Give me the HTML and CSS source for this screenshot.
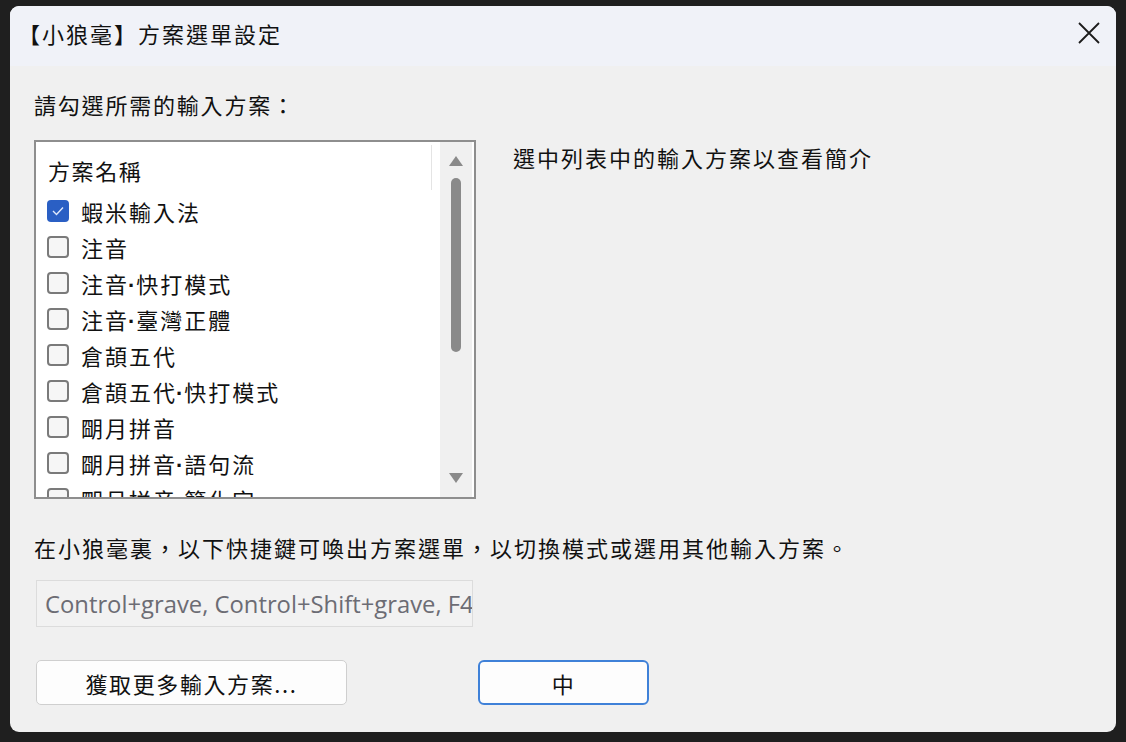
FILE: index.html
```html
<!DOCTYPE html>
<html lang="zh-Hant">
<head>
  <meta charset="UTF-8" />
  <title>【小狼毫】方案選單設定</title>
  <link rel="stylesheet" href="styles.css">
</head>
<body>
  <div class="window">
    <div class="titlebar">
      <div class="title">【小狼毫】方案選單設定</div>
      <button class="close-btn" aria-label="關閉">
        <svg width="22" height="22" viewBox="0 0 22 22">
          <path d="M1 1 L21 21 M21 1 L1 21" stroke="#1b1b1b" stroke-width="1.8" fill="none"/>
        </svg>
      </button>
    </div>

    <div class="content">
      <div class="label">請勾選所需的輸入方案：</div>

      <div class="top-row">
        <div class="listbox">
          <div class="list-body">
            <div class="list-header">方案名稱</div>
            <div class="item"><span class="check checked"><svg width="12" height="10" viewBox="0 0 12 10"><path d="M1 5 L4.5 8.5 L11 1.5" stroke="#dfe8fb" stroke-width="1.4" fill="none"/></svg></span><span class="name">蝦米輸入法</span></div>
            <div class="item"><span class="check"></span><span class="name">注音</span></div>
            <div class="item"><span class="check"></span><span class="name">注音<span class="dot">·</span>快打模式</span></div>
            <div class="item"><span class="check"></span><span class="name">注音<span class="dot">·</span>臺灣正體</span></div>
            <div class="item"><span class="check"></span><span class="name">倉頡五代</span></div>
            <div class="item"><span class="check"></span><span class="name">倉頡五代<span class="dot">·</span>快打模式</span></div>
            <div class="item"><span class="check"></span><span class="name">朙月拼音</span></div>
            <div class="item"><span class="check"></span><span class="name">朙月拼音<span class="dot">·</span>語句流</span></div>
            <div class="item"><span class="check"></span><span class="name">朙月拼音<span class="dot">·</span>簡化字</span></div>
          </div>
          <div class="scrollbar">
            <svg class="arrow-up" width="14" height="10" viewBox="0 0 14 10"><path d="M7 0 L14 10 L0 10 Z" fill="#8a8a8a"/></svg>
            <div class="thumb"></div>
            <div class="spacer"></div>
            <svg class="arrow-down" width="14" height="10" viewBox="0 0 14 10"><path d="M0 0 L14 0 L7 10 Z" fill="#8a8a8a"/></svg>
          </div>
        </div>
        <div class="info">選中列表中的輸入方案以查看簡介</div>
      </div>

      <div class="sentence">在小狼毫裏，以下快捷鍵可喚出方案選單，以切換模式或選用其他輸入方案。</div>

      <div class="hotkeys">Control+grave, Control+Shift+grave, F4</div>

      <div class="buttons">
        <button class="btn">獲取更多輸入方案...</button>
        <button class="btn btn-default">中</button>
      </div>
    </div>
  </div>
</body>
</html>
```

FILE: styles.css
```css
body {
  margin: 0;
  padding: 6px 10px 10px 10px;
  background-color: #1f1f1f;
  font-family: "Noto Sans CJK TC", "Noto Sans", sans-serif;
  color: #111;
}

.window {
  width: 1106px;
  height: 726px;
  border-radius: 9px;
  overflow: hidden;
  background-color: #f0f0f0;
  display: flex;
  flex-direction: column;
}

.titlebar {
  height: 60px;
  background-color: #f0f2f8;
  display: flex;
  align-items: center;
  justify-content: space-between;
  padding: 0 16px 6px 8px;
  box-sizing: border-box;
}

.title {
  font-size: 22px;
  letter-spacing: 2px;
  line-height: 30px;
}

.close-btn {
  background: transparent;
  border: none;
  padding: 0;
  width: 22px;
  height: 22px;
  display: flex;
  cursor: pointer;
}

.content {
  padding: 23px 0 0 24px;
  display: flex;
  flex-direction: column;
}

.label,
.info,
.sentence {
  font-size: 22px;
  letter-spacing: 2px;
  line-height: 30px;
}

.label {
  letter-spacing: 1.8px;
}

.top-row {
  display: flex;
  gap: 37px;
  margin-top: 21px;
}

.listbox {
  width: 442px;
  height: 359px;
  box-sizing: border-box;
  border: 2px solid #8e8e8e;
  background-color: white;
  display: flex;
}

.list-body {
  flex: 1;
  overflow: hidden;
  padding-left: 11px;
}

.list-header {
  margin: 3px 8px 3px 0;
  height: 45px;
  padding: 5px 0 0 1px;
  box-sizing: border-box;
  border-right: 1px solid #e4e4e4;
  display: flex;
  align-items: center;
  font-size: 22px;
  letter-spacing: 1.6px;
}

.item {
  height: 36px;
  display: flex;
  align-items: center;
  gap: 12px;
  font-size: 22px;
  letter-spacing: 2px;
  white-space: nowrap;
}

.dot {
  font-family: "Liberation Sans", sans-serif;
  font-weight: bold;
  letter-spacing: 0;
  margin: 0 1px 0 -1px;
}

.check {
  width: 22px;
  height: 22px;
  flex-shrink: 0;
  box-sizing: border-box;
  border: 2px solid #7a7a7a;
  border-radius: 4px;
  background-color: #f6f6f6;
  display: flex;
  align-items: center;
  justify-content: center;
}

.check.checked {
  border: none;
  background-color: #2a5fc4;
}

.scrollbar {
  width: 32px;
  margin-right: 2px;
  background-color: #f0f0f0;
  display: flex;
  flex-direction: column;
  align-items: center;
}

.arrow-up {
  margin-top: 14px;
}

.thumb {
  width: 10px;
  height: 174px;
  margin-top: 12px;
  border-radius: 5px;
  background-color: #8a8a8a;
}

.spacer {
  flex: 1;
}

.arrow-down {
  margin-bottom: 14px;
}

.info {
  margin-top: 2px;
}

.sentence {
  margin-top: 33px;
}

.hotkeys {
  margin: 18px 0 0 2px;
  width: 437px;
  height: 47px;
  box-sizing: border-box;
  border: 1px solid #dcdcdc;
  background-color: #f2f2f2;
  padding-left: 8px;
  display: flex;
  align-items: center;
  overflow: hidden;
  white-space: nowrap;
  font-family: "Open Sans", "Noto Sans", sans-serif;
  font-size: 23.8px;
  color: #6c6c74;
}

.buttons {
  display: flex;
  margin: 33px 0 0 2px;
}

.btn {
  height: 45px;
  width: 311px;
  box-sizing: border-box;
  border: 1px solid #cfcfcf;
  border-radius: 5px;
  background-color: #fdfdfd;
  font-family: "Noto Sans CJK TC", "Noto Sans", sans-serif;
  font-size: 22px;
  letter-spacing: 1.6px;
  color: #111;
  cursor: pointer;
}

.btn-default {
  width: 171px;
  margin-left: 131px;
  border: 2px solid #3f81d8;
  border-radius: 6px;
  font-size: 22px;
}
```
